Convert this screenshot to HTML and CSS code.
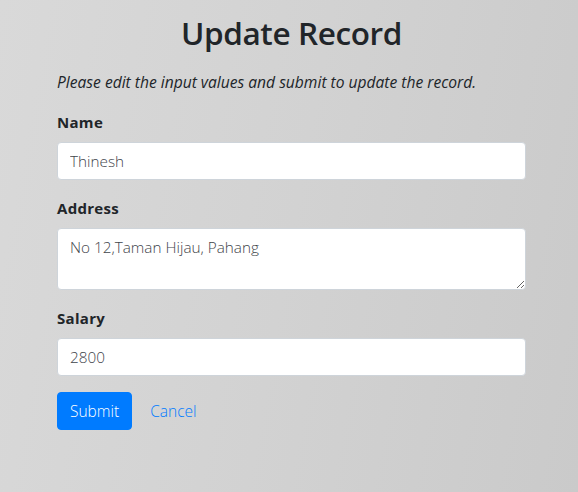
FILE: index.html
```html
<!DOCTYPE html>
<html lang="en">
<head>
<meta charset="utf-8">
<title>Update Record</title>
<link rel="stylesheet" href="styles.css">
</head>
<body>
<div class="wrapper">
  <h2 class="title">Update Record</h2>
  <p class="lead-note">Please edit the input values and submit to update the record.</p>
  <form class="form">
    <div class="form-group">
      <label class="label">Name</label>
      <input class="control" type="text" value="Thinesh">
    </div>
    <div class="form-group">
      <label class="label">Address</label>
      <textarea class="control area">No 12,Taman Hijau, Pahang</textarea>
    </div>
    <div class="form-group">
      <label class="label">Salary</label>
      <input class="control" type="text" value="2800">
    </div>
    <div class="actions">
      <button class="btn btn-primary" type="button">Submit</button>
      <a class="btn btn-link" href="#">Cancel</a>
    </div>
  </form>
</div>
</body>
</html>
```

FILE: styles.css
```css
html, body {
  margin: 0;
  padding: 0;
}
body {
  min-height: 100vh;
  background: linear-gradient(100deg, #d9d9d9 0%, #d2d2d2 50%, #cacaca 100%);
  font-family: "Open Sans", "Noto Sans", sans-serif;
  color: #212529;
  font-size: 16px;
  line-height: 24px;
}
.wrapper {
  width: 469px;
  padding-left: 57px;
}
.title {
  margin: 13px 0 17px;
  font-size: 31.5px;
  line-height: 40px;
  font-weight: 600;
  letter-spacing: -0.4px;
  text-align: center;
}
.lead-note {
  margin: 0 0 16px;
  font-style: italic;
  font-size: 15.6px;
}
.form-group {
  margin-bottom: 16px;
}
.label {
  display: block;
  margin-bottom: 8px;
  font-weight: 700;
  font-size: 15px;
  letter-spacing: 0.3px;
}
.control {
  display: block;
  box-sizing: border-box;
  width: 100%;
  height: 38px;
  margin: 0;
  padding: 6px 12px;
  border: 1px solid #ced4da;
  border-radius: 4px;
  background: #fff;
  font-family: "Open Sans", "Noto Sans", sans-serif;
  font-size: 15.3px;
  line-height: 24px;
  color: #3f454b;
  font-weight: 300;
}
.area {
  height: 62px;
  resize: vertical;
}
.actions {
  display: flex;
  align-items: center;
  gap: 5px;
}
.btn {
  display: inline-block;
  box-sizing: border-box;
  height: 38px;
  padding: 6px 12px;
  border: 1px solid transparent;
  border-radius: 4px;
  font-family: "Open Sans", "Noto Sans", sans-serif;
  font-size: 15.5px;
  font-weight: 300;
  line-height: 24px;
  text-decoration: none;
}
.btn-primary {
  background: #007bff;
  border-color: #007bff;
  color: #fff;
}
.btn-link {
  color: #007bff;
  background: transparent;
}
```
